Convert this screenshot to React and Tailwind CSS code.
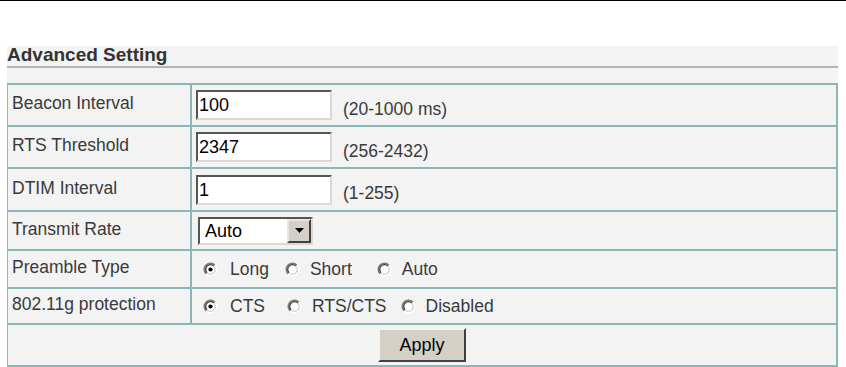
import React from "react";

function Radio({ checked }) {
  return (
    <svg width="15" height="15" viewBox="0 0 15 15" className="shrink-0">
      <circle cx="7.5" cy="7.5" r="6.2" fill="#ffffff" />
      <path d="M3.1 11.9 A6.2 6.2 0 0 1 11.9 3.1" stroke="#7a7a7a" strokeWidth="1.6" fill="none" />
      <path d="M4.1 10.9 A4.8 4.8 0 0 1 10.9 4.1" stroke="#3a3a3a" strokeWidth="1.3" fill="none" />
      <path d="M11.9 3.1 A6.2 6.2 0 0 1 3.1 11.9" stroke="#ffffff" strokeWidth="1.6" fill="none" />
      <path d="M10.9 4.1 A4.8 4.8 0 0 1 4.1 10.9" stroke="#d4d0c8" strokeWidth="1.3" fill="none" />
      {checked && <circle cx="7.5" cy="7.5" r="2.1" fill="#000" />}
    </svg>
  );
}

function TextBox({ value }) {
  return (
    <div className="w-[136px] h-[30px] border-2 border-t-[#555] border-l-[#555] border-b-[#dcd9d2] border-r-[#dcd9d2] bg-white flex items-center pl-[1px] text-[18px] text-black leading-none">
      {value}
    </div>
  );
}

function Row({ h, label, children }) {
  return (
    <div className={`flex ${h} border-t-2 border-[#8cb7b7]`}>
      <div className="w-[184px] shrink-0 border-r-2 border-[#8cb7b7] flex items-center pl-[4px] pb-[3px]">
        {label}
      </div>
      <div className="flex-1 flex items-center pl-[4px]">{children}</div>
    </div>
  );
}

export default function App() {
  const border = "border-[#8cb7b7]";
  return (
    <div className="w-[846px] h-[367px] overflow-hidden bg-white font-['Liberation_Sans',Arial,sans-serif] text-[#3a3a3a] text-[17.5px]">
      <div className="h-[1px] bg-black" />
      <div className="mt-[45px] mx-[7px] w-[831px] h-[37px] bg-[#f3f3f3]">
        <div className="h-[20px] leading-[18px] text-[19px] font-bold text-[#333]">Advanced Setting</div>
        <div className="h-[2px] bg-[#b4b4b4]" />
      </div>
      <div className={`ml-[7px] w-[831px] bg-[#f3f3f3] border-l border-r-2 border-b-2 ${border}`}>
        <Row h="h-[42px]" label="Beacon Interval">
          <div className="flex items-end">
            <TextBox value="100" />
            <span className="ml-[11px] mb-[2px] leading-none">(20-1000 ms)</span>
          </div>
        </Row>
        <Row h="h-[42px]" label="RTS Threshold">
          <div className="flex items-end">
            <TextBox value="2347" />
            <span className="ml-[11px] mb-[2px] leading-none">(256-2432)</span>
          </div>
        </Row>
        <Row h="h-[43px]" label="DTIM Interval">
          <div className="flex items-end">
            <TextBox value="1" />
            <span className="ml-[11px] mb-[2px] leading-none">(1-255)</span>
          </div>
        </Row>
        <Row h="h-[39px]" label="Transmit Rate">
          <div className="ml-[2px] w-[115px] h-[28px] border-2 border-t-[#555] border-l-[#555] border-b-[#dcd9d2] border-r-[#dcd9d2] bg-white flex items-center">
            <span className="flex-1 pl-[5px] text-[18px] text-black leading-none">Auto</span>
            <div className="w-[24px] h-[24px] bg-[#d4d0c8] border-2 border-t-[#e8e6e1] border-l-[#e8e6e1] border-b-[#404040] border-r-[#404040] flex items-center justify-center">
              <svg width="9" height="5" viewBox="0 0 9 5">
                <path d="M0 0 H9 L4.5 5 Z" fill="#000" />
              </svg>
            </div>
          </div>
        </Row>
        <Row h="h-[38px]" label="Preamble Type">
          <div className="flex items-center ml-[7px]">
            <Radio checked />
            <span className="ml-[12px]">Long</span>
            <span className="ml-[16px] flex"><Radio /></span>
            <span className="ml-[10px]">Short</span>
            <span className="ml-[25px] flex"><Radio /></span>
            <span className="ml-[10px]">Auto</span>
          </div>
        </Row>
        <Row h="h-[36px]" label="802.11g protection">
          <div className="flex items-center ml-[7px]">
            <Radio checked />
            <span className="ml-[12px]">CTS</span>
            <span className="ml-[22px] flex"><Radio /></span>
            <span className="ml-[10px]">RTS/CTS</span>
            <span className="ml-[14px] flex"><Radio /></span>
            <span className="ml-[10px]">Disabled</span>
          </div>
        </Row>
        <div className={`h-[42px] border-t-2 ${border} flex items-center justify-center`}>
          <button className="w-[88px] h-[34px] bg-[#d4d0c8] border-2 border-t-[#f4f3f0] border-l-[#f4f3f0] border-b-[#404040] border-r-[#404040] text-[18px] text-black leading-none">
            Apply
          </button>
        </div>
      </div>
    </div>
  );
}
